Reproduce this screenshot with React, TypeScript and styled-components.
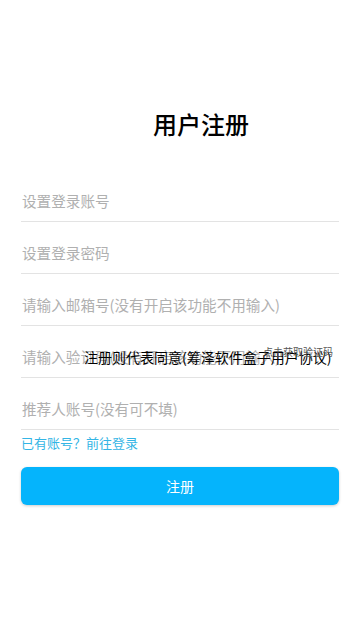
import React from 'react'
import styled, { createGlobalStyle } from 'styled-components'

const GlobalStyle = createGlobalStyle`
    html, body {
        margin: 0;
        padding: 0;
        background: #ffffff;
        font-family: "Noto Sans CJK SC", "Noto Sans", sans-serif;
    }
    * {
        box-sizing: border-box;
    }
`

const fields = [
    { placeholder: '设置登录账号', type: 'text' },
    { placeholder: '设置登录密码', type: 'password' },
    { placeholder: '请输入邮箱号(没有开启该功能不用输入)', type: 'text' },
    { placeholder: '请输入验证码(没有开启该功能不用输入)', type: 'text', code: true },
    { placeholder: '推荐人账号(没有可不填)', type: 'text' },
]

const App: React.FC = () => {
    return (
        <>
            <GlobalStyle />
            <Page>
                <Title>用户注册</Title>
                <Form>
                    {fields.map((field, index) => (
                        <Field key={index}>
                            <Input type={field.type} placeholder={field.placeholder} />
                            {field.code && (
                                <>
                                    <Agreement>注册则代表同意(筹泽软件盒子用户协议)</Agreement>
                                    <CodeButton>点击获取验证码</CodeButton>
                                </>
                            )}
                        </Field>
                    ))}
                    <LoginLink>已有账号？前往登录</LoginLink>
                    <SubmitButton>注册</SubmitButton>
                </Form>
            </Page>
        </>
    )
}

export default App

const Page = styled.div`
    width: 360px;
    min-height: 641px;
    padding: 112px 21px 0;
    background: #ffffff;
`

const Title = styled.h1`
    margin: 0 0 34px;
    padding-left: 42px;
    text-align: center;
    font-size: 24px;
    line-height: 24px;
    font-weight: 500;
    color: #000000;
`

const Form = styled.div`
    display: flex;
    flex-direction: column;
`

const Field = styled.div`
    position: relative;
    margin-top: 12px;
    border-bottom: 1px solid #e3e3e3;
`

const Input = styled.input`
    display: block;
    width: 100%;
    height: 37px;
    margin-bottom: 2px;
    padding: 0 1px;
    border: none;
    outline: none;
    background: transparent;
    font-family: inherit;
    font-size: 14.6px;
    color: #333333;

    &::placeholder {
        color: #b0b0b0;
    }
`

const Agreement = styled.span`
    position: absolute;
    left: 63px;
    top: 9px;
    font-size: 14px;
    line-height: 20px;
    color: #000000;
    white-space: nowrap;
    pointer-events: none;
`

const CodeButton = styled.span`
    position: absolute;
    right: 6px;
    top: 7px;
    font-size: 10px;
    line-height: 14px;
    color: #555555;
    white-space: nowrap;
`

const LoginLink = styled.a`
    margin-top: 4px;
    font-size: 13px;
    line-height: 18px;
    color: #33b5e5;
    cursor: pointer;
`

const SubmitButton = styled.button`
    margin-top: 15px;
    height: 38px;
    border: none;
    border-radius: 6px;
    background: #05b4fc;
    box-shadow: 0 1px 3px rgba(0, 0, 0, 0.2);
    font-family: inherit;
    font-size: 14px;
    color: #ffffff;
    cursor: pointer;
`
